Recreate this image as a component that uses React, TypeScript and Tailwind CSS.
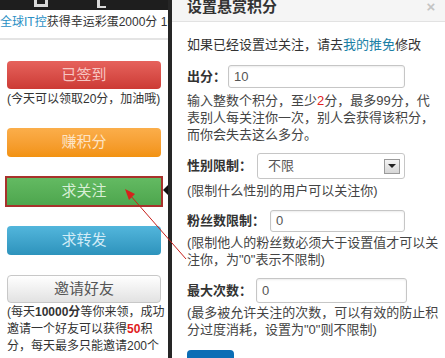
import { JSX } from "react"

export default function App(): JSX.Element {
    return (
        <div className="relative w-[445px] h-[358px] overflow-hidden flex bg-white font-['Liberation_Sans','Noto_Sans_CJK_SC',sans-serif]">
            <LeftPanel />
            <div className="relative w-[4px] shrink-0 bg-[#262626]">
                <div className="absolute -left-[5px] top-[185px] w-0 h-0 border-y-[5px] border-y-transparent border-r-[5px] border-r-[#111]" />
            </div>
            <RewardModal />
            <svg className="absolute inset-0 pointer-events-none" width="445" height="358">
                <line x1="186" y1="259" x2="130" y2="195" stroke="#c8201c" strokeWidth="1" />
                <polygon points="125,189 135,194 129,200" fill="#d4231d" />
            </svg>
        </div>
    )
}

function LeftPanel(): JSX.Element {
    return (
        <div className="w-[168px] shrink-0 flex flex-col bg-white text-[#333]">
            <div className="h-[10px] bg-[#1e1e1e] flex items-start pl-[34px] gap-[49px]">
                <div className="w-[14px] h-[7px] border-x-[3px] border-b-[3px] border-[#d8d8d8]" />
                <div className="w-[9px] h-[8px] border-l-[3px] border-b-[2px] border-[#d8d8d8]" />
            </div>
            <div className="h-[30px] border-b-2 border-[#e4e4e4] text-[12px] leading-[24px] whitespace-nowrap overflow-hidden">
                <span className="text-[#2a8fc4]">全球IT控</span>获得幸运彩蛋2000分 16
            </div>
            <div className="px-[7px] pt-[21px] flex flex-col">
                <ActionButton label="已签到" className="h-[28px] rounded-[4px] bg-linear-to-b from-[#e6625c] to-[#cc3a35] text-[#f7c6c3]" />
                <div className="mt-[1px] text-[12px] leading-[18px] whitespace-nowrap">(今天可以领取20分，加油哦)</div>
                <ActionButton label="赚积分" className="mt-[20px] h-[29px] rounded-[4px] bg-linear-to-b from-[#fbae4a] to-[#f2920f] text-[#fde4c6]" />
                <div className="-mx-[2px] mt-[19px] h-[31px] border-2 border-[#a8322c]">
                    <ActionButton label="求关注" className="h-full bg-linear-to-b from-[#63ba62] to-[#4ea64e] text-[#d8efd6]" />
                </div>
                <ActionButton label="求转发" className="mt-[19px] h-[29px] rounded-[4px] bg-linear-to-b from-[#52b6dc] to-[#2d93bc] text-[#d2ecf7]" />
                <ActionButton label="邀请好友" className="mt-[20px] h-[28px] rounded-[4px] border border-[#c8c8c8] bg-linear-to-b from-[#ffffff] to-[#e2e2e2] text-[#555]" />
                <div className="mt-[1px] text-[12px] leading-[17px] whitespace-nowrap">
                    <div>(每天<b>10000分</b>等你来领，成功</div>
                    <div>邀请一个好友可以获得<b className="text-[#e02020]">50</b>积</div>
                    <div>分，每天最多只能邀请200个</div>
                </div>
            </div>
        </div>
    )
}

function ActionButton({ label, className }: { label: string, className: string }): JSX.Element {
    return (
        <div className={`flex items-center justify-center text-[15px] ${className}`}>
            {label}
        </div>
    )
}

function TextInput({ value, width }: { value: string, width: string }): JSX.Element {
    return (
        <div className={`h-full ${width} flex items-center pl-[5px] border border-[#c6c6c6] rounded-[3px] bg-white shadow-[inset_0_1px_2px_rgba(0,0,0,0.08)] text-[13px] text-[#555]`}>
            {value}
        </div>
    )
}

function RewardModal(): JSX.Element {
    return (
        <div className="flex-1 flex flex-col bg-white text-[#333]">
            <div className="h-[22px] shrink-0 bg-[#f5f5f5] border-b border-[#e2e2e2] flex justify-between pl-[15px] pr-[11px]">
                <div className="text-[15px] font-bold leading-[14px]">设置悬赏积分</div>
                <div className="text-[15px] font-bold leading-[14px] text-[#c4c4c4]">×</div>
            </div>
            <div className="pl-[15px] pr-[8px] text-[13px] whitespace-nowrap">
                <div className="mt-[14px] leading-[18px]">
                    如果已经设置过关注，请去<span className="text-[#1b7fa6]">我的推免</span>修改
                </div>
                <div className="mt-[11px] h-[23px] flex items-center">
                    <div className="w-[41px] font-bold">出分：</div>
                    <TextInput value="10" width="w-[177px]" />
                </div>
                <div className="mt-[4px] leading-[17px] text-[#444]">
                    <div>输入整数个积分，至少<span className="text-[#e02020]">2</span>分，最多99分，代</div>
                    <div>表别人每关注你一次，别人会获得该积分，</div>
                    <div>而你会失去这么多分。</div>
                </div>
                <div className="mt-[10px] h-[26px] flex items-center">
                    <div className="w-[70px] font-bold">性别限制：</div>
                    <div className="h-full w-[148px] flex items-center justify-between pl-[10px] pr-[4px] border border-[#c6c6c6] rounded-[3px] bg-white text-[#555]">
                        <span>不限</span>
                        <div className="w-[16px] h-[15px] flex items-center justify-center border border-[#9a9a9a] bg-linear-to-b from-[#f4f4f4] to-[#d6d6d6]">
                            <div className="w-0 h-0 border-x-[4px] border-x-transparent border-t-[4px] border-t-[#222]" />
                        </div>
                    </div>
                </div>
                <div className="mt-[3px] leading-[17px] text-[#444]">(限制什么性别的用户可以关注你)</div>
                <div className="mt-[11px] h-[22px] flex items-center">
                    <div className="w-[83px] font-bold">粉丝数限制：</div>
                    <TextInput value="0" width="w-[135px]" />
                </div>
                <div className="mt-[2px] leading-[17px] text-[#444]">
                    <div>(限制他人的粉丝数必须大于设置值才可以关</div>
                    <div>注你，为"0"表示不限制)</div>
                </div>
                <div className="mt-[10px] h-[25px] flex items-center">
                    <div className="w-[69px] font-bold">最大次数：</div>
                    <TextInput value="0" width="w-[151px]" />
                </div>
                <div className="mt-[1px] leading-[17px] text-[#444]">
                    <div>(最多被允许关注的次数，可以有效的防止积</div>
                    <div>分过度消耗，设置为"0"则不限制)</div>
                </div>
                <div className="mt-[12px] w-[47px] h-[20px] rounded-t-[4px] bg-[#0b6db5]" />
            </div>
        </div>
    )
}
